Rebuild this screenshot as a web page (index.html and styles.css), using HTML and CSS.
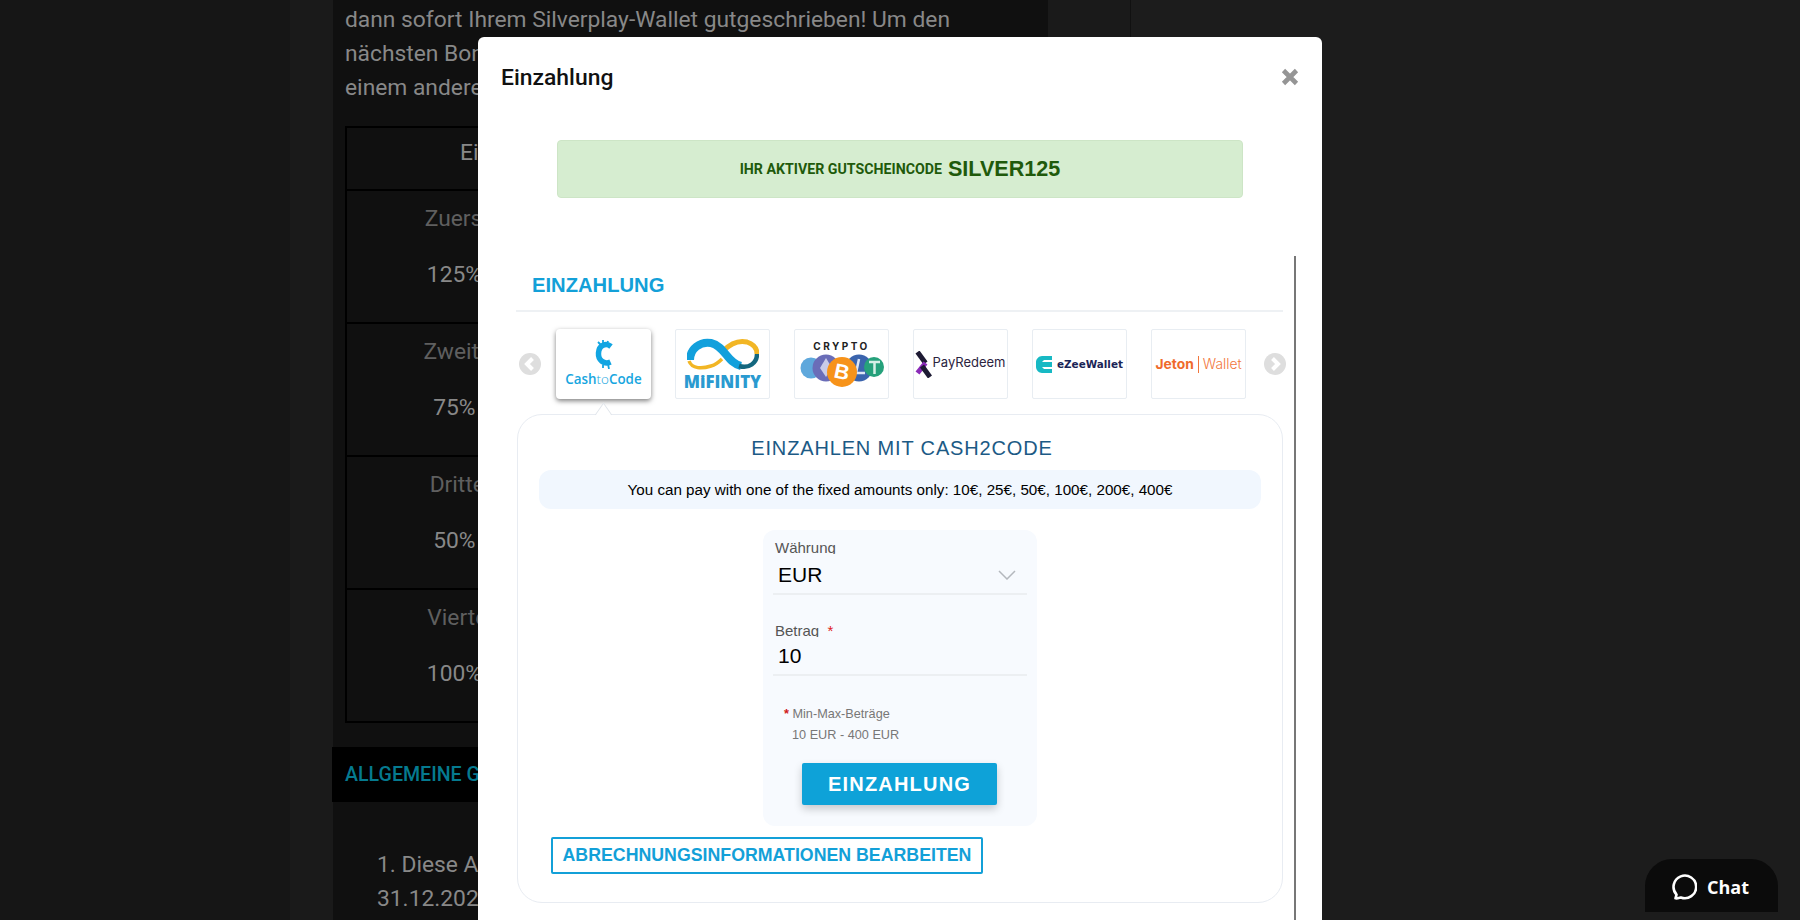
FILE: index.html
```html
<!DOCTYPE html>
<html lang="de">
<head>
  <meta charset="UTF-8" />
  <title>Einzahlung</title>
  <link rel="stylesheet" href="styles.css">
</head>
<body>
  <div class="page">
    <div class="side side-left"></div>
    <main class="content">
      <p class="intro">dann sofort Ihrem Silverplay-Wallet gutgeschrieben! Um den<br>nächsten Bonus zu erhalten<br>einem anderen Konto</p>
      <table class="bonus">
        <tr><th>Einzahlung</th><th>Bonus</th></tr>
        <tr><td><span class="muted">Zuerst Einzahlung</span><span>125% bis zu 300€</span></td><td></td></tr>
        <tr><td><span class="muted">Zweite Einzahlung</span><span>75% bis zu 300€</span></td><td></td></tr>
        <tr><td><span class="muted">Dritte Einzahlung</span><span>50% bis zu 300€</span></td><td></td></tr>
        <tr><td><span class="muted">Vierte Einzahlung</span><span>100% bis zu 300€</span></td><td></td></tr>
      </table>
      <h3 class="section">ALLGEMEINE GESCHÄFTSBEDINGUNGEN</h3>
      <p class="terms">1. Diese Aktion gilt bis<br>31.12.2024</p>
    </main>
    <div class="side side-right"></div>
  </div>

  <div class="modal">
    <div class="modal-head">
      <h2>Einzahlung</h2>
      <svg class="close" width="18" height="18" viewBox="0 0 18 18"><path d="M2.500 2.500l13 13M15.500 2.500l-13 13" stroke="#959595" stroke-width="4.600" fill="none"/></svg>
    </div>
    <div class="voucher"><span>IHR AKTIVER GUTSCHEINCODE</span> <strong>SILVER125</strong></div>

    <div class="frame">
      <h3 class="frame-title">EINZAHLUNG</h3>
      <div class="methods">
        <svg class="arrow" width="22" height="22" viewBox="0 0 22 22"><circle cx="11" cy="11" r="11" fill="#dedede"/><path d="M13.500 5.500L8 11l5.500 5.500" stroke="#fff" stroke-width="4" fill="none"/></svg>

        <div class="tile tile-active">
          <svg width="22" height="29" viewBox="0 0 22 29"><path d="M18 6.500C13 2.500 6 5 5.500 13c-.5 7 5.500 12 12 9" stroke="#12a5e2" stroke-width="5.500" fill="none"/><path d="M5 2l3 3M10 0v4M15 1l-1 4M15 24l1 5M10 25v3" stroke="#12a5e2" stroke-width="1.800"/></svg>
          <div class="cash-name">Cash<i>to</i>Code</div>
        </div>

        <div class="tile">
          <svg width="72" height="33" viewBox="0 0 72 33">
            <path d="M2 23C5 31 15 31 24 28c4-1 8-4 11-7" stroke="#f2b625" stroke-width="3.500" fill="none"/>
            <path d="M36 13c7-7 16-11 24-9 6 2 10 6 10 12" stroke="#f2b625" stroke-width="5" fill="none"/>
            <path d="M3 22C3 11 13 3 24 5c14 3 16 20 30 23" stroke="#12a0dc" stroke-width="8" fill="none"/>
            <path d="M52 28c10 3 18-3 18-12" stroke="#14677f" stroke-width="4.500" fill="none"/>
          </svg>
          <div class="mifinity-name">MiFINITY</div>
        </div>

        <div class="tile">
          <div class="crypto-name">CRYPTO</div>
          <svg width="86" height="34" viewBox="0 0 86 34">
            <circle cx="12" cy="15" r="10.500" fill="#5fa8dc"/>
            <circle cx="27" cy="15" r="13.500" fill="#6a6db8"/>
            <path d="M27 5l-6 10 6 9 6-9z" fill="#c9cbe8"/>
            <circle cx="60" cy="15" r="13.500" fill="#3b64ad"/>
            <path d="M60 6l-3 14h9" stroke="#dfe6f5" stroke-width="2.500" fill="none"/>
            <circle cx="75" cy="14" r="10" fill="#26a17b"/>
            <path d="M70 9h11M75.500 9v12" stroke="#d6efe6" stroke-width="2.500" fill="none"/>
            <circle cx="43" cy="19" r="15" fill="#f7931a"/>
            <text class="btc" x="43" y="26" text-anchor="middle" transform="rotate(12 43 19)">B</text>
          </svg>
        </div>

        <div class="tile tile-row">
          <svg width="17" height="27" viewBox="0 0 17 27"><path d="M2.500 1l8 11" stroke="#1d1a33" stroke-width="5" fill="none"/><path d="M10.500 12l-8 10" stroke="#8a2bb8" stroke-width="5" fill="none"/><path d="M7 15l8 11" stroke="#1d1a33" stroke-width="5" fill="none"/></svg>
          <span class="pay-name">PayRedeem</span>
        </div>

        <div class="tile tile-row">
          <svg width="17" height="17" viewBox="0 0 17 17"><path d="M16 0H6C3 0 0 3 0 6v5c0 3 3 6 6 6h10v-4H8l-2-2h10V6H6l2-2h8z" fill="#17b9c4"/></svg>
          <span class="ezee-name">eZeeWallet</span>
        </div>

        <div class="tile tile-row">
          <span class="jeton-name"><b>Jeton</b><em></em>Wallet</span>
        </div>

        <svg class="arrow" width="22" height="22" viewBox="0 0 22 22"><circle cx="11" cy="11" r="11" fill="#dedede"/><path d="M8.500 5.500L14 11l-5.500 5.500" stroke="#fff" stroke-width="4" fill="none"/></svg>
      </div>

      <section class="panel">
        <div class="caret"></div>
        <h4>EINZAHLEN MIT CASH2CODE</h4>
        <div class="info">You can pay with one of the fixed amounts only: 10€, 25€, 50€, 100€, 200€, 400€</div>
        <form class="form">
          <div class="field">
            <label>Währung</label>
            <div class="value">EUR
              <svg width="18" height="10" viewBox="0 0 18 10"><path d="M1 1l8 8 8-8" stroke="#b4b8bd" stroke-width="1.500" fill="none"/></svg>
            </div>
          </div>
          <div class="field">
            <label>Betrag <b>*</b></label>
            <div class="value">10</div>
          </div>
          <div class="limits">
            <div><b>*</b> Min-Max-Beträge</div>
            <div class="limits-range">10 EUR - 400 EUR</div>
          </div>
          <button type="button" class="submit">EINZAHLUNG</button>
        </form>
        <button type="button" class="edit">ABRECHNUNGSINFORMATIONEN BEARBEITEN</button>
      </section>
    </div>
  </div>

  <div class="chat">
    <svg width="28" height="28" viewBox="0 0 26 26"><path d="M6 23.500l1-3.500a10.500 10.500 0 1 1 4 2.700c-1.500.7-3.200 1-5 .8z" stroke="#fff" stroke-width="2.400" fill="none" stroke-linejoin="round"/></svg>
    <span>Chat</span>
  </div>
</body>
</html>
```

FILE: styles.css
```css
html, body {
  margin: 0;
  height: 920px;
  overflow: hidden;
  background: #161616;
}

.page {
  display: flex;
  height: 920px;
  font-family: 'Roboto', sans-serif;
}

.side-left {
  width: 290px;
  border-right: 43px solid #1a1a1a;
}

.content {
  width: 715px;
  background: #101010;
  color: #888;
}

.side-right {
  flex: 1;
  background: #1c1c1c;
  border-left: 82px solid #1a1a1a;
  box-shadow: inset 1px 0 0 #111;
}

.intro {
  margin: 3px 12px 0;
  font-size: 22.800px;
  line-height: 34px;
  white-space: nowrap;
}

.bonus {
  margin: 21px 0 0 12px;
  border-collapse: collapse;
  table-layout: fixed;
  width: 680px;
  border: 2px solid #000;
  font-size: 22.800px;
  text-align: center;
}

.bonus th {
  height: 49px;
  padding: 0 0 12px;
  font-weight: 400;
  border: 2px solid #000;
}

.bonus td {
  height: 131px;
  padding: 0;
  border: 2px solid #000;
  vertical-align: top;
}

.bonus td span {
  display: block;
  line-height: 56px;
}

.muted {
  color: #5f5f5f;
}

.section {
  margin: 24px 0 0 -1px;
  height: 55px;
  padding-left: 13px;
  background: #000;
  color: #057a8f;
  font-size: 19.600px;
  font-weight: 500;
  line-height: 55px;
  white-space: nowrap;
}

.terms {
  margin: 46px 44px 0;
  font-size: 22.800px;
  line-height: 34px;
}

.modal {
  position: absolute;
  left: 478px;
  top: 37px;
  width: 844px;
  height: 883px;
  overflow: hidden;
  background: #fff;
  border-radius: 6px 6px 0 0;
  font-family: 'Liberation Sans', sans-serif;
}

.modal-head {
  display: flex;
  justify-content: space-between;
  align-items: center;
  height: 80px;
  padding: 0 23px 0 23px;
}

.modal-head h2 {
  margin: 0;
  font-family: 'Roboto', sans-serif;
  font-size: 22.900px;
  font-weight: 500;
  color: #111;
}

.voucher {
  display: flex;
  justify-content: center;
  align-items: center;
  gap: 6px;
  height: 56px;
  margin: 23px 79px 0;
  width: 684px;
  background: #d6edd0;
  border: 1px solid #cde5c6;
  border-radius: 4px;
  color: #1f5a0b;
  font-family: 'Roboto', sans-serif;
  font-weight: 700;
}

.voucher span {
  font-size: 14.200px;
}

.voucher strong {
  font-family: 'Liberation Sans', sans-serif;
  font-size: 21.600px;
}

.frame {
  margin: 58px 0 0 38px;
  width: 767px;
  height: 664px;
  padding-right: 11px;
  border-right: 2px solid #777;
}

.frame-title {
  margin: 0;
  padding: 17px 0 0 16px;
  box-sizing: border-box;
  height: 56px;
  border-bottom: 2px solid #eef1f4;
  color: #13a0d8;
  font-size: 20.200px;
  line-height: 24px;
}

.methods {
  display: flex;
  align-items: center;
  margin: 17px 0 0;
  padding: 0 0 0 3px;
}

.arrow {
  flex: none;
}

.arrow:first-child {
  margin-right: 15px;
}

.tile {
  display: flex;
  flex-direction: column;
  align-items: center;
  justify-content: center;
  box-sizing: border-box;
  flex: none;
  width: 95px;
  height: 70px;
  margin-right: 24px;
  border: 1px solid #e8edf2;
  border-radius: 2px;
  background: #fff;
}

.tile:nth-child(7) {
  margin-right: 18px;
}

.tile-row {
  flex-direction: row;
  gap: 4px;
}

.tile-active {
  border: 0;
  border-radius: 4px;
  box-shadow: 0 2px 5px rgba(0, 0, 0, 0.5);
}

.cash-name {
  margin-top: 2px;
  font-family: 'Open Sans', sans-serif;
  font-size: 13.400px;
  font-weight: 600;
  line-height: 17px;
  color: #17a6e0;
}

.cash-name i {
  font-style: normal;
  font-weight: 300;
}

.mifinity-name {
  font-family: 'Open Sans', sans-serif;
  font-size: 16.800px;
  font-weight: 800;
  line-height: 19px;
  margin-top: 1px;
  color: #2a9ad0;
}

.crypto-name {
  margin-bottom: 0;
  margin-top: -2px;
  font-family: 'Inter', sans-serif;
  font-size: 10px;
  font-weight: 700;
  letter-spacing: 2.500px;
  line-height: 14px;
  color: #222;
}

.btc {
  font-family: 'Liberation Sans', sans-serif;
  font-size: 21px;
  font-weight: 700;
  fill: #fff;
}

.pay-name {
  margin-left: -4px;
  margin-top: -4px;
  font-family: 'Inter', sans-serif;
  font-size: 13px;
  color: #2b2440;
}

.ezee-name {
  font-family: 'DejaVu Sans', sans-serif;
  font-size: 10.400px;
  font-weight: 700;
  color: #1a2456;
}

.jeton-name {
  display: flex;
  align-items: center;
  font-family: 'Inter', sans-serif;
  font-size: 13.800px;
  font-weight: 300;
  color: #f2763c;
}

.jeton-name b {
  font-weight: 700;
  color: #ef6a2b;
}

.jeton-name em {
  width: 1px;
  height: 17px;
  margin: 0 4px;
  background: #f2763c;
}

.panel {
  position: relative;
  box-sizing: border-box;
  height: 489px;
  margin: 15px 0 0 1px;
  padding: 22px 21px 0;
  width: 766px;
  border: 1px solid #e8ecf2;
  border-radius: 25px;
}

.caret {
  position: absolute;
  left: 77px;
  top: -9px;
  width: 17px;
  height: 17px;
  box-sizing: border-box;
  background: linear-gradient(135deg, #fff 50%, transparent 50%);
  border-left: 1px solid #dfe4ea;
  border-top: 1px solid #dfe4ea;
  transform: scaleX(0.7) rotate(45deg);
}

.panel h4 {
  margin: 0;
  height: 33px;
  padding-left: 4px;
  font-size: 20px;
  font-weight: 400;
  line-height: 23px;
  letter-spacing: 0.850px;
  text-align: center;
  color: #1c5a85;
}

.info {
  height: 39px;
  background: #f1f7fe;
  border-radius: 12px;
  color: #000;
  font-size: 15.200px;
  line-height: 39px;
  text-align: center;
}

.form {
  box-sizing: border-box;
  width: 274px;
  height: 296px;
  margin: 21px auto 0;
  padding: 10px 10px 0;
  background: #f7fafe;
  border-radius: 12px;
}

.field {
  margin-bottom: 8px;
  border-bottom: 2px solid #eceff2;
  box-sizing: border-box;
  height: 55px;
}

.field + .field {
  margin-top: 26px;
  height: 55px;
}

.field label {
  display: block;
  height: 14px;
  overflow: hidden;
  padding-left: 2px;
  color: #555;
  font-size: 15px;
  line-height: 16px;
}

.field + .field label {
  padding-top: 2px;
}

.value {
  display: flex;
  justify-content: space-between;
  align-items: center;
  padding: 6px 11px 0 5px;
  font-size: 21px;
  line-height: 30px;
  color: #000;
}

.field + .field .value {
  padding-top: 4px;
}

.field label b {
  margin-left: 4px;
  color: #e02020;
  font-weight: 400;
}

.limits {
  margin: 28px 0 0 11px;
  color: #777;
  font-size: 12.700px;
  line-height: 21px;
}

.limits b {
  color: #d01818;
}

.limits-range {
  margin-top: 0;
  padding-left: 8px;
}

.submit {
  display: block;
  width: 195px;
  height: 42px;
  margin: 17px 0 0 29px;
  border: 0;
  border-radius: 2px;
  background: #0ea2d8;
  box-shadow: 0 4px 8px rgba(0, 0, 0, 0.2);
  color: #fff;
  font-family: 'Liberation Sans', sans-serif;
  font-size: 20px;
  font-weight: 700;
  letter-spacing: 1.200px;
}

.edit {
  display: block;
  width: 432px;
  height: 37px;
  margin: 11px 0 0 12px;
  padding: 0;
  border: 2px solid #13a0d8;
  border-radius: 2px;
  background: #fff;
  color: #13a0d8;
  font-family: 'Liberation Sans', sans-serif;
  font-size: 17.750px;
  font-weight: 700;
}

.chat {
  position: absolute;
  left: 1645px;
  top: 859px;
  display: flex;
  align-items: center;
  justify-content: center;
  gap: 10px;
  width: 133px;
  height: 53px;
  padding: 3px 5px 0 0;
  box-sizing: border-box;
  background: #0b0b0b;
  border-radius: 27px 27px 0 0;
  color: #fff;
  font-family: 'Open Sans', sans-serif;
  font-size: 18px;
  font-weight: 700;
}
```
